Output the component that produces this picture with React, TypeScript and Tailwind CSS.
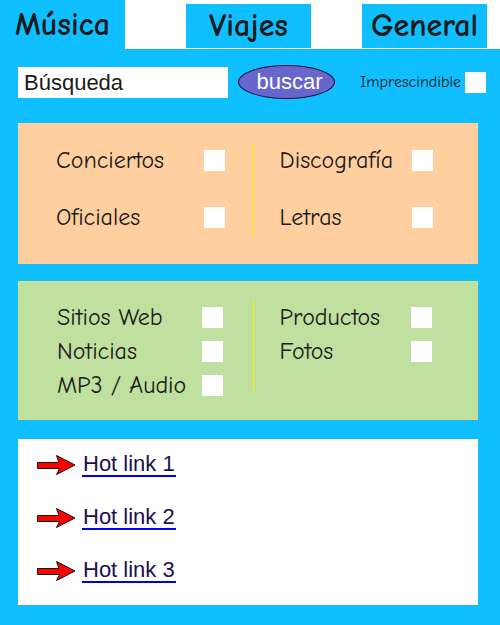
import React from "react";

const comic = "font-['Comic_Sans_MS','Comic_Neue','Open_Sans',cursive]";
const arial = "font-['Liberation_Sans',Arial,sans-serif]";

const box =
  "size-[21px] shrink-0 appearance-none bg-white checked:bg-[#6666cc] focus-visible:outline-2 focus-visible:outline-[#6666cc]";

function Option({ label }: { label: string }) {
  return (
    <label className="flex items-center justify-between text-[24px] leading-[34px]">
      <span>{label}</span>
      <input type="checkbox" className={box} />
    </label>
  );
}

function Column({ items, className }: { items: string[]; className: string }) {
  return (
    <div className={`flex flex-col ${className}`}>
      {items.map((item) => (
        <Option key={item} label={item} />
      ))}
    </div>
  );
}

function HotLink({ label }: { label: string }) {
  return (
    <li className="flex items-center gap-1.5">
      <svg width="40" height="22" viewBox="0 0 40 22" aria-hidden="true">
        <path
          d="M1.5 8.5H23L20.5 1.5L39 11L20.5 20.5L23.5 14.5H1.5Z"
          fill="#f00"
          stroke="#111"
          strokeWidth="1"
        />
      </svg>
      <a
        href="#"
        className="border-b-2 border-[#0000f0] px-px text-[22px] leading-[22px] text-[#21104f]"
      >
        {label}
      </a>
    </li>
  );
}

export default function App() {
  return (
    <div className={`min-h-screen bg-[#10bfff] pb-5 text-[#1c1a1a] ${comic}`}>
      <nav className="flex h-[49px] bg-white text-[32px] leading-[40px] font-bold">
        <button type="button" className="h-[49px] w-1/4 bg-[#10bfff]">
          Música
        </button>
        <div className="flex flex-1 items-center justify-between pt-0.5 pr-[13px] pl-[61px]">
          <button type="button" className="h-11 w-[125px] bg-[#10bfff]">
            Viajes
          </button>
          <button type="button" className="h-11 w-[125px] bg-[#10bfff]">
            General
          </button>
        </div>
      </nav>

      <main className="mr-[22px] ml-[18px]">
        <form
          className="-mr-2 flex items-center pt-4"
          onSubmit={(e) => e.preventDefault()}
        >
          <input
            type="text"
            aria-label="Búsqueda"
            defaultValue="Búsqueda"
            className={`h-[31px] w-[210px] min-w-0 bg-white px-1.5 text-[22px] ${arial}`}
          />
          <button
            type="submit"
            className={`ml-2.5 h-[34px] w-[97px] rounded-[50%] border border-[#111133] bg-[#6666cc] pl-1.5 text-[22px] leading-[30px] text-white ${arial}`}
          >
            buscar
          </button>
          <label className="ml-auto flex items-center gap-1 text-[16px] leading-[20px]">
            <span>Imprescindible</span>
            <input type="checkbox" className={box} />
          </label>
        </form>

        <section className="mt-6 flex items-start bg-[#ffcf9f] pt-5 pb-7">
          <Column items={["Conciertos", "Oficiales"]} className="w-[51%] gap-[23px] pr-7 pl-[38px]" />
          <div className="h-[93px] shrink-0 border-l border-[#fff000]" />
          <Column items={["Discografía", "Letras"]} className="flex-1 gap-[23px] pr-[45px] pl-[26px]" />
        </section>

        <section className="mt-[17px] flex items-start border border-[#d8dc84] bg-[#c0e09f] pt-[18px] pb-[17px]">
          <Column items={["Sitios Web", "Noticias", "MP3 / Audio"]} className="w-[51%] pr-[30px] pl-[38px]" />
          <div className="h-[93px] shrink-0 border-l border-[#fff000]" />
          <Column items={["Productos", "Fotos"]} className="flex-1 pr-[45px] pl-[26px]" />
        </section>

        <ul className={`mt-[19px] flex flex-col gap-[29px] bg-white pt-[14px] pb-[22px] pl-[18px] ${arial}`}>
          <HotLink label="Hot link 1" />
          <HotLink label="Hot link 2" />
          <HotLink label="Hot link 3" />
        </ul>
      </main>
    </div>
  );
}
